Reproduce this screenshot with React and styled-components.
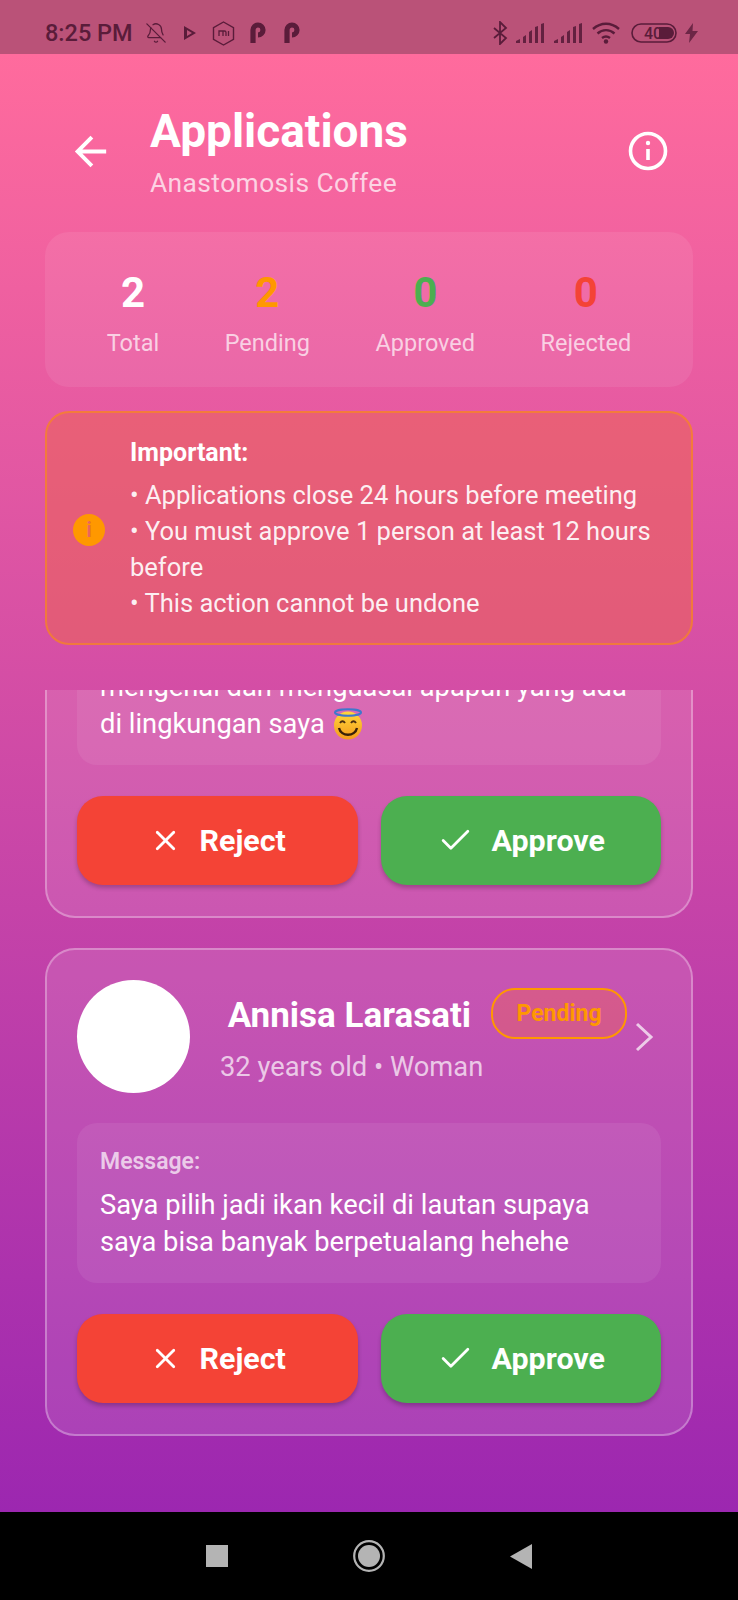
import React from "react";
import styled, { createGlobalStyle } from "styled-components";
import { X, Check, BellOff } from "lucide-react";
import { MdArrowBack } from "react-icons/md";

const Global = createGlobalStyle`
  html, body { margin: 0; padding: 0; background: #000; }
  body { font-family: Roboto, "Liberation Sans", sans-serif; }
`;

const Screen = styled.div`
  width: 738px;
  height: 1600px;
  display: flex;
  flex-direction: column;
  overflow: hidden;
`;

const StatusBar = styled.div`
  height: 54px;
  flex: none;
  box-sizing: border-box;
  display: flex;
  align-items: center;
  justify-content: space-between;
  padding: 12px 40px 0 45px;
  background: #ba5278;
  color: #5a1c3a;
`;

const StatusGroup = styled.div`
  display: flex;
  align-items: center;
`;

const Time = styled.span`
  font-size: 23.500px;
  font-weight: 500;
  width: 100px;
`;

const Main = styled.div`
  flex: 1;
  min-height: 0;
  display: flex;
  flex-direction: column;
  background: linear-gradient(180deg, #ff6b9d 0%, #9c27b0 100%);
`;

const Header = styled.header`
  height: 178px;
  flex: none;
  box-sizing: border-box;
  display: flex;
  align-items: center;
  padding: 16px 70px 0 67px;
  color: #fff;
`;

const HeaderText = styled.div`
  flex: 1;
  margin-left: 36px;
  margin-top: 2px;
`;

const Title = styled.h1`
  margin: 0;
  font-size: 46px;
  line-height: 56px;
  font-weight: 700;
`;

const Subtitle = styled.div`
  font-size: 26.400px;
  line-height: 36px;
  margin-top: 6px;
  letter-spacing: 0.4px;
  color: rgba(255, 255, 255, 0.72);
`;

const Stats = styled.section`
  height: 155px;
  margin: 0 45px;
  flex: none;
  box-sizing: border-box;
  display: flex;
  justify-content: space-around;
  align-items: center;
  padding: 7px 29px 0;
  border-radius: 24px;
  background: rgba(255, 255, 255, 0.08);
`;

const Stat = styled.div`
  display: flex;
  flex-direction: column;
  align-items: center;
`;

const StatValue = styled.div`
  font-size: 42px;
  line-height: 50px;
  font-weight: 700;
  margin-top: -1px;
  color: ${(p) => p.$color};
`;

const StatLabel = styled.div`
  font-size: 23.500px;
  line-height: 30px;
  margin-top: 10px;
  color: rgba(255, 255, 255, 0.7);
`;

const Alert = styled.section`
  height: 234px;
  margin: 24px 45px 0;
  flex: none;
  box-sizing: border-box;
  display: flex;
  align-items: center;
  padding: 3px 30px 0 26px;
  border: 2px solid rgba(255, 152, 0, 0.5);
  border-radius: 24px;
  background: rgba(235, 100, 85, 0.55);
  color: #fff;
`;

const AlertIcon = styled.div`
  width: 32px;
  height: 32px;
  flex: none;
  border-radius: 50%;
  background: #ff9800;
  color: #e8665f;
  font-size: 22px;
  font-weight: 500;
  line-height: 32px;
  text-align: center;
  margin-right: 25px;
`;

const AlertTitle = styled.div`
  font-size: 25px;
  line-height: 30px;
  font-weight: 700;
  margin-bottom: 9px;
`;

const AlertBody = styled.div`
  font-size: 25.500px;
  line-height: 36px;
  color: rgba(255, 255, 255, 0.92);
`;

const List = styled.div`
  flex: 1;
  min-height: 0;
  margin-top: 45px;
  padding: 0 45px 76px;
  display: flex;
  flex-direction: column;
  justify-content: flex-end;
  gap: 30px;
  overflow: hidden;
`;

const Card = styled.article`
  flex: none;
  box-sizing: border-box;
  padding: 30px 30px 31px;
  border: 2px solid rgba(255, 255, 255, 0.3);
  border-radius: 30px;
  background: rgba(255, 255, 255, 0.11);
`;

const Person = styled.div`
  display: flex;
  align-items: center;
  margin-bottom: 30px;
`;

const Avatar = styled.div`
  width: 113px;
  height: 113px;
  flex: none;
  border-radius: 50%;
  background: #fff;
`;

const PersonInfo = styled.div`
  width: 407px;
  flex: none;
  margin: 0 0 2px 30px;
  display: flex;
  flex-direction: column;
`;

const NameRow = styled.div`
  align-self: flex-end;
  display: flex;
  align-items: center;
  gap: 20px;
`;

const Name = styled.div`
  font-size: 35px;
  font-weight: 700;
  color: #fff;
`;

const Badge = styled.div`
  height: 51px;
  width: 136px;
  margin-bottom: 4px;
  box-sizing: border-box;
  display: flex;
  align-items: center;
  justify-content: center;
  border: 2px solid #ff9800;
  border-radius: 24px;
  background: rgba(235, 100, 85, 0.4);
  color: #ff9800;
  font-size: 23px;
  font-weight: 700;
`;

const Meta = styled.div`
  font-size: 27.300px;
  line-height: 34px;
  margin-top: 7px;
  color: rgba(255, 255, 255, 0.7);
`;

const Chevron = styled.svg`
  flex: none;
  margin-left: 8px;
  fill: none;
  stroke: rgba(255, 255, 255, 0.7);
  stroke-width: 3;
`;

const Message = styled.div`
  box-sizing: border-box;
  padding: 23px 23px 22px;
  border-radius: 20px;
  background: rgba(255, 255, 255, 0.07);
`;

const MessageLabel = styled.div`
  font-size: 23px;
  line-height: 32px;
  font-weight: 600;
  color: rgba(255, 255, 255, 0.7);
`;

const MessageText = styled.div`
  margin-top: 9px;
  font-size: 27.300px;
  line-height: 37px;
  color: #fff;
`;

const Actions = styled.div`
  display: flex;
  gap: 23px;
  margin-top: 31px;
`;

const ActionButton = styled.button`
  flex: 1;
  height: 89px;
  display: flex;
  align-items: center;
  justify-content: center;
  gap: 18px;
  border: 0;
  border-radius: 26px;
  background: ${(p) => p.$bg};
  color: #fff;
  font-family: inherit;
  font-size: 30.400px;
  font-weight: 700;
  box-shadow: 0 3px 4px rgba(0, 0, 0, 0.22);
`;

const NavBar = styled.nav`
  height: 88px;
  flex: none;
  background: #000;
  display: flex;
  align-items: center;
  justify-content: center;
  gap: 125px;
`;

const Halo = () => (
  <svg width="32" height="32" viewBox="0 0 32 32" style={{ verticalAlign: "-7px" }}>
    <defs>
      <linearGradient id="face" x1="0" y1="0" x2="0" y2="1">
        <stop offset="0" stopColor="#ffd83c" />
        <stop offset="1" stopColor="#f59a1c" />
      </linearGradient>
    </defs>
    <circle cx="16" cy="17.500" r="14" fill="url(#face)" />
    <ellipse cx="16" cy="4.500" rx="13" ry="3.200" fill="none" stroke="#3f78cc" strokeWidth="2" />
    <path d="M8 15q2.500-3.500 5 0M19 15q2.500-3.500 5 0" fill="none" stroke="#4a2c10" strokeWidth="2" />
    <path d="M7 20c2 9 16 9 18 0" fill="none" stroke="#3a2008" strokeWidth="2.400" />
  </svg>
);

const SignalIcon = () => (
  <svg width="28" height="20" viewBox="0 0 28 20" fill="currentColor">
    <path d="M0 20v-2l4-2v4zM7 20v-6l3-2v8zM13 20V9l3-2v13zM19 20V4l3-1v17zM25 20V1l3-1v20z" opacity=".9" />
  </svg>
);

const StatusIcons = () => (
  <StatusGroup>
    <svg width="16" height="24" viewBox="0 0 16 24" fill="none" stroke="currentColor" strokeWidth="1.800" style={{ marginRight: 8 }}>
      <path d="M2 7l12 10-6 6V1l6 6L2 17" />
    </svg>
    <SignalIcon />
    <span style={{ width: 10 }} />
    <SignalIcon />
    <svg width="28" height="22" viewBox="0 0 28 22" fill="none" stroke="currentColor" strokeWidth="2.400" style={{ marginLeft: 10 }}>
      <path d="M1 7c8-7 18-7 26 0M5.500 11.500c5-4.500 12-4.500 17 0M10 16c2.500-2 5.500-2 8 0" />
      <circle cx="14" cy="19.500" r="2.200" fill="currentColor" stroke="none" />
    </svg>
    <svg width="46" height="20" viewBox="0 0 46 20" style={{ marginLeft: 11 }}>
      <rect x="1" y="1" width="44" height="18" rx="9" fill="none" stroke="currentColor" strokeWidth="1.600" />
      <path d="M28 4h9a6 6 0 0 1 0 12h-9z" fill="currentColor" />
      <text x="13" y="16" fontSize="16" fontWeight="500" fontFamily="Roboto" fill="currentColor">40</text>
    </svg>
    <svg width="13" height="20" viewBox="0 0 13 20" fill="currentColor" opacity=".8" style={{ marginLeft: 8 }}>
      <path d="M8 0L0 11h5l-1 9 9-12H7.500z" />
    </svg>
  </StatusGroup>
);

const LeftIcons = () => (
  <StatusGroup>
    <Time>8:25 PM</Time>
    <BellOff size={22} strokeWidth={1.400} />
    <svg width="12" height="14" viewBox="0 0 12 14" fill="currentColor" style={{ marginLeft: 17 }}>
      <path d="M0 0l12 7-12 7zM3 4v6l5-3z" fillRule="evenodd" />
    </svg>
    <svg width="23" height="25" viewBox="0 0 23 25" fill="none" stroke="currentColor" strokeWidth="1.400" style={{ marginLeft: 16 }}>
      <path d="M11.500 1l10 5.700v11.600l-10 5.700-10-5.700V6.700z" />
      <path d="M7 15v-5h4v5M11 10h1.500c1 0 1.500 .6 1.500 1.500V15M16.500 10v5" strokeWidth="1.300" />
    </svg>
    <svg width="16" height="22" viewBox="0 0 16 22" fill="none" stroke="currentColor" strokeWidth="5.200" style={{ marginLeft: 15 }}>
      <path d="M3 21V8a5 5 0 1 1 5 5" />
    </svg>
    <svg width="16" height="22" viewBox="0 0 16 22" fill="none" stroke="currentColor" strokeWidth="5.200" style={{ marginLeft: 18 }}>
      <path d="M3 21V8a5 5 0 1 1 5 5" />
    </svg>
  </StatusGroup>
);

const Buttons = () => (
  <Actions>
    <ActionButton $bg="#f44336">
      <X size={33} strokeWidth={2} />
      Reject
    </ActionButton>
    <ActionButton $bg="#4caf50">
      <Check size={37} strokeWidth={1.800} />
      Approve
    </ActionButton>
  </Actions>
);

export default function App() {
  return (
    <Screen>
      <Global />
      <StatusBar>
        <LeftIcons />
        <StatusIcons />
      </StatusBar>
      <Main>
        <Header>
          <MdArrowBack size={47} />
          <HeaderText>
            <Title>Applications</Title>
            <Subtitle>Anastomosis Coffee</Subtitle>
          </HeaderText>
          <svg width="40" height="40" viewBox="0 0 40 40" fill="none" stroke="#fff" strokeWidth="3.600">
            <circle cx="20" cy="20" r="17.500" />
            <path d="M20 18v11" />
            <circle cx="20" cy="12" r="2.200" fill="#fff" stroke="none" />
          </svg>
        </Header>
        <Stats>
          <Stat>
            <StatValue $color="#fff">2</StatValue>
            <StatLabel>Total</StatLabel>
          </Stat>
          <Stat>
            <StatValue $color="#ff9800">2</StatValue>
            <StatLabel>Pending</StatLabel>
          </Stat>
          <Stat>
            <StatValue $color="#4caf50">0</StatValue>
            <StatLabel>Approved</StatLabel>
          </Stat>
          <Stat>
            <StatValue $color="#f44336">0</StatValue>
            <StatLabel>Rejected</StatLabel>
          </Stat>
        </Stats>
        <Alert>
          <AlertIcon>i</AlertIcon>
          <div>
            <AlertTitle>Important:</AlertTitle>
            <AlertBody>
              • Applications close 24 hours before meeting
              <br />
              • You must approve 1 person at least 12 hours before
              <br />
              • This action cannot be undone
            </AlertBody>
          </div>
        </Alert>
        <List>
          <Card>
            <Message>
              <MessageText>
                mengenal dan menguasai apapun yang ada
                <br />
                di lingkungan saya <Halo />
              </MessageText>
            </Message>
            <Buttons />
          </Card>
          <Card>
            <Person>
              <Avatar />
              <PersonInfo>
                <NameRow>
                  <Name>Annisa Larasati</Name>
                  <Badge>Pending</Badge>
                </NameRow>
                <Meta>32 years old • Woman</Meta>
              </PersonInfo>
              <Chevron width="20" height="30" viewBox="0 0 20 30">
                <path d="M2 2l14 13L2 28" />
              </Chevron>
            </Person>
            <Message>
              <MessageLabel>Message:</MessageLabel>
              <MessageText>
                Saya pilih jadi ikan kecil di lautan supaya
                <br />
                saya bisa banyak berpetualang hehehe
              </MessageText>
            </Message>
            <Buttons />
          </Card>
        </List>
      </Main>
      <NavBar>
        <svg width="22" height="22" viewBox="0 0 22 22"><rect width="22" height="22" fill="#b4b4b4" /></svg>
        <svg width="32" height="32" viewBox="0 0 32 32">
          <circle cx="16" cy="16" r="14.800" fill="none" stroke="#b4b4b4" strokeWidth="2.200" />
          <circle cx="16" cy="16" r="11" fill="#b4b4b4" />
        </svg>
        <svg width="22" height="25" viewBox="0 0 22 25"><path d="M22 0v25L0 12.500z" fill="#b4b4b4" /></svg>
      </NavBar>
    </Screen>
  );
}
